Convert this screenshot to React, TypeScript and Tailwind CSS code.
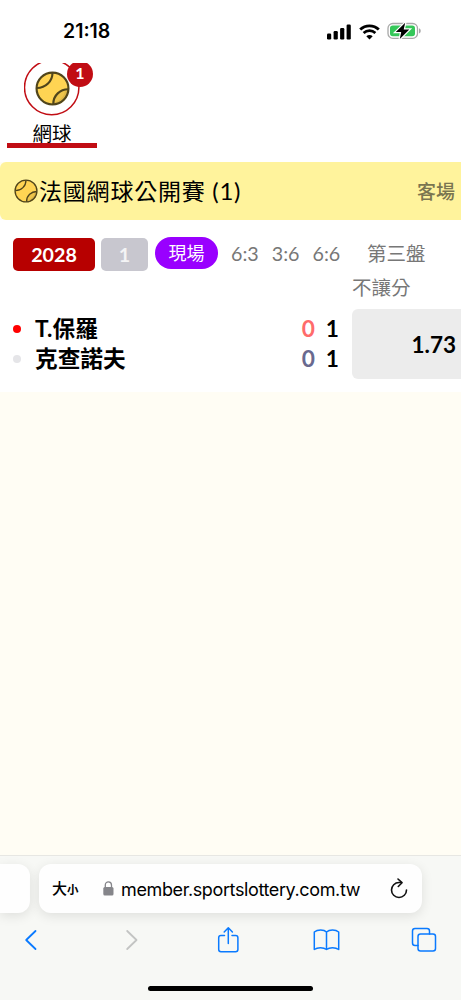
import clsx from "clsx";

const SETS = ["6:3", "3:6", "6:6"];

const PLAYERS = [
  { name: "T.保羅", games: 0, points: 1, serving: true },
  { name: "克查諾夫", games: 0, points: 1, serving: false },
];

function TennisBall({ className, thin }: { className: string; thin?: boolean }) {
  const stroke = thin ? 2 : 2.2;
  return (
    <svg viewBox="0 0 36 36" className={className} fill="none">
      <circle cx="18" cy="18" r="16.4" fill="#ffd453" />
      <path d="M34 19C26 19 19 26 19 34C27 36 35 28 34 19Z" fill="#e0b947" />
      <path d="M31 19.3C24.5 20.5 20 26 19 32.2C26 31 30.500 26 31 19.300Z" fill="#ffd453" opacity=".45" />
      <g stroke="#50451b" strokeWidth={stroke}>
        <circle cx="18" cy="18" r="16.4" />
        <path d="M2 17.500C11 17.500 18 10.500 18 1.800" />
        <path d="M18.800 34C18.800 25 26 18.800 34 18.800" />
      </g>
    </svg>
  );
}

function StatusBar() {
  return (
    <div className="flex h-[63px] shrink-0 items-center justify-between bg-white pl-[63px] pr-[39px] font-['Inter']">
      <span className="mt-px text-[19.5px] font-semibold leading-none">21:18</span>
      <div className="flex items-center">
        <svg width="24" height="16" viewBox="0 0 24 16">
          <rect x="0" y="9.500" width="4.200" height="6" rx="1.200" />
          <rect x="6.600" y="7" width="4.200" height="8.500" rx="1.200" />
          <rect x="13.100" y="4" width="4.200" height="11.500" rx="1.200" />
          <rect x="19.600" y="0.500" width="4.200" height="15" rx="1.200" />
        </svg>
        <svg className="ml-2" width="21" height="16" viewBox="0 0 21 16" fill="none" stroke="#000">
          <path d="M1.200 5.600C6.400.6 14.600.6 19.800 5.600" strokeWidth="2.800" />
          <path d="M4.600 9C8 5.900 13 5.900 16.400 9" strokeWidth="2.700" />
          <path d="M10.500 15.500L7.300 12.300C9.100 10.700 11.900 10.700 13.700 12.300Z" fill="#000" stroke="none" />
        </svg>
        <svg className="-mt-px ml-[7px]" width="35" height="18" viewBox="0 0 35 18">
          <rect x="1" y="1.500" width="29.500" height="14.800" rx="4.800" fill="none" stroke="#a8a8a8" strokeWidth="1.300" />
          <path d="M32 6.300C34.300 7 34.300 10.800 32 11.500Z" fill="#a8a8a8" />
          <rect x="3" y="3.500" width="25" height="10.800" rx="2.800" fill="#35c759" />
          <path d="M18.200.8L8.800 10H14.200L12.800 17L22.300 7.500H16.700Z" fill="#000" stroke="#fff" strokeWidth="2.400" paintOrder="stroke" />
        </svg>
      </div>
    </div>
  );
}

function SportTabs() {
  return (
    <div className="h-[99px] shrink-0 overflow-hidden bg-white pl-[7px]">
      <div className="flex h-[85px] w-[90px] flex-col items-center border-b-[5px] border-[#c10d14]">
        <div className="relative -mt-[3px] flex h-14 w-14 shrink-0 items-center justify-center">
          <svg viewBox="0 0 56 56" className="absolute inset-0" fill="none">
            <circle cx="27.700" cy="27.500" r="27.200" stroke="#c10d14" strokeWidth="1.500" />
          </svg>
          <TennisBall className="h-[35px] w-[35px]" />
          <span className="absolute -right-[13px] top-px flex h-[26px] w-[26px] items-center justify-center rounded-full bg-[#c10d14] pb-[2px] text-base font-bold leading-none text-white">
            1
          </span>
        </div>
        <span className="mt-[5px] text-[19.5px] leading-[26px]">網球</span>
      </div>
    </div>
  );
}

function LeagueHeader() {
  return (
    <div className="flex h-[58px] shrink-0 items-center rounded-l-md bg-[#fff39c] pl-[14px] pr-[6px]">
      <TennisBall className="h-6 w-6" thin />
      <span className="ml-px text-[23px] leading-none tracking-[0.8px]">
        法國網球公開賽 <span className="text-[24px] tracking-[0.7px]">(1)</span>
      </span>
      <span className="ml-auto text-[19px] font-medium leading-none text-[#7a7550]">客場</span>
    </div>
  );
}

function MatchCard() {
  return (
    <div className="h-[172px] shrink-0 bg-white pl-[13px]">
      <div className="flex h-[67px] items-start pt-[17px] text-[19.7px] leading-8 text-[#777]">
        <span className="mt-px flex h-[33px] w-[82px] items-center justify-center rounded-[5px] bg-[#b70000] pt-px font-bold text-white">
          2028
        </span>
        <span className="ml-1.5 mt-px flex h-[33px] w-[47px] items-center justify-center rounded-[5px] bg-[#c8c7cf] pt-px font-bold text-white/80">
          1
        </span>
        <span className="ml-[7px] flex h-8 w-[63px] items-center justify-center rounded-full bg-[#9900ff] text-[18px] text-white">
          現場
        </span>
        <div className="ml-[13px] flex w-[110px] gap-[13px] whitespace-nowrap pt-px">
          {SETS.map((score) => (
            <span key={score}>{score}</span>
          ))}
        </div>
        <div className="ml-[11px] text-[19.5px]">
          <div className="pl-[15px] leading-[34px]">第三盤</div>
          <div className="leading-[34px]">不讓分</div>
        </div>
      </div>

      <div className="flex pt-[22px]">
        <div className="w-[339px] pt-[6px]">
          {PLAYERS.map((player) => (
            <div key={player.name} className="flex h-[29.500px] items-center pr-[13px] text-[22.7px] font-bold leading-none">
              <span className={clsx("-mt-px h-2 w-2 rounded-full", player.serving ? "bg-[#ff0000]" : "bg-[#e5e5e8]")} />
              <span className="ml-[14px]">{player.name}</span>
              <span className={clsx("ml-auto", player.serving ? "text-[#ff6b6b]" : "text-[#69698f]")}>
                {player.games}
              </span>
              <span className="ml-[11px]">{player.points}</span>
            </div>
          ))}
        </div>
        <button className="flex h-[70px] flex-1 items-center justify-end rounded-l-md bg-[#ececec] pr-[5px] pt-px text-[22.5px] font-bold">
          1.73
        </button>
      </div>
    </div>
  );
}

function BrowserBar() {
  return (
    <div className="flex h-[145px] shrink-0 flex-col overflow-hidden border-t border-[#e7e7e3] bg-[#f7f8f5] font-['Inter','Noto_Sans_CJK_TC',sans-serif]">
      <div className="flex gap-[9px] pt-2">
        <div className="h-[49px] w-[30px] rounded-r-[12px] bg-[#fefefe] shadow-[0_3px_12px_rgba(0,0,0,0.1)]" />
        <div className="flex h-[49px] w-[383px] items-center rounded-[12px] bg-[#fefefe] pl-[13px] pr-[14px] shadow-[0_3px_12px_rgba(0,0,0,0.1)]">
          <span className="w-[27px] whitespace-nowrap text-[15px] font-medium leading-none">
            大<span className="text-[11.5px] font-bold">小</span>
          </span>
          <svg className="ml-[24px]" width="11" height="15" viewBox="0 0 11 15">
            <rect x="0.300" y="6" width="10.200" height="8.500" rx="1.500" fill="#85858a" />
            <path d="M2.300 6.500V4C2.300-.2 8.500-.2 8.500 4V6.500" fill="none" stroke="#85858a" strokeWidth="1.300" />
          </svg>
          <span className="ml-[7px] mt-[2px] text-[18px] leading-none tracking-[-0.38px]">member.sportslottery.com.tw</span>
          <svg className="ml-auto" width="18" height="21" viewBox="0 0 18 21" fill="none" stroke="#111" strokeWidth="1.600" strokeLinecap="round" strokeLinejoin="round">
            <path d="M11 4.500H9A7.500 7.500 0 1 0 16.500 12" />
            <path d="M8 1L12 4.700L8.300 8.500" />
          </svg>
        </div>
      </div>

      <div className="flex h-[54px] items-center pl-[24px] text-[#0a7aff]">
        <svg width="14" height="22" viewBox="0 0 14 22" fill="none" stroke="currentColor" strokeWidth="1.800" strokeLinecap="round" strokeLinejoin="round">
          <path d="M11.500 2L2.200 11L11.500 20" />
        </svg>
        <svg className="ml-[87px] text-[#c3c4c3]" width="14" height="22" viewBox="0 0 14 22" fill="none" stroke="currentColor" strokeWidth="1.800" strokeLinecap="round" strokeLinejoin="round">
          <path d="M2.200 2L11.500 11L2.200 20" />
        </svg>
        <svg className="-mt-px ml-[77px]" width="24" height="28" viewBox="0 0 24 28" fill="none" stroke="currentColor" strokeWidth="1.500" strokeLinecap="round" strokeLinejoin="round">
          <path d="M8.500 9.500H5Q2.700 9.500 2.700 11.700V23.500Q2.700 25.700 5 25.700H19.600Q21.900 25.700 21.900 23.500V11.700Q21.900 9.500 19.600 9.500H16" />
          <path d="M12.300 17.500V2M8.200 6L12.300 1.800L16.400 6" />
        </svg>
        <svg className="ml-[73px]" width="28" height="24" viewBox="0 0 28 24" fill="none" stroke="currentColor" strokeWidth="1.500" strokeLinecap="round" strokeLinejoin="round">
          <path d="M13.500 4C11 1.200 4.500 1.200 1.300 4V21.500C4.500 19.200 10.500 19.200 13.500 21.500C16.500 19.200 22.500 19.200 25.700 21.500V4C22.500 1.200 16.500 1.200 13.500 4ZM13.500 4V21.500" />
        </svg>
        <svg className="ml-[70px]" width="26" height="26" viewBox="0 0 26 26" fill="none" stroke="currentColor" strokeWidth="1.500" strokeLinecap="round" strokeLinejoin="round">
          <path d="M7 18.500H4Q1.500 18.500 1.500 16V4Q1.500 1.500 4 1.500H16Q18.500 1.500 18.500 4V7" />
          <rect x="7" y="7" width="17.500" height="17" rx="2.500" />
        </svg>
      </div>

      <div className="mx-auto mt-[19px] h-[5px] w-[165px] rounded-full bg-black" />
    </div>
  );
}

export default function App() {
  return (
    <div className="flex h-[1000px] w-[461px] flex-col overflow-hidden bg-[#fffdf4] font-['Lato','Noto_Sans_CJK_TC',sans-serif] text-black">
      <StatusBar />
      <SportTabs />
      <LeagueHeader />
      <MatchCard />
      <div className="flex-1" />
      <BrowserBar />
    </div>
  );
}
